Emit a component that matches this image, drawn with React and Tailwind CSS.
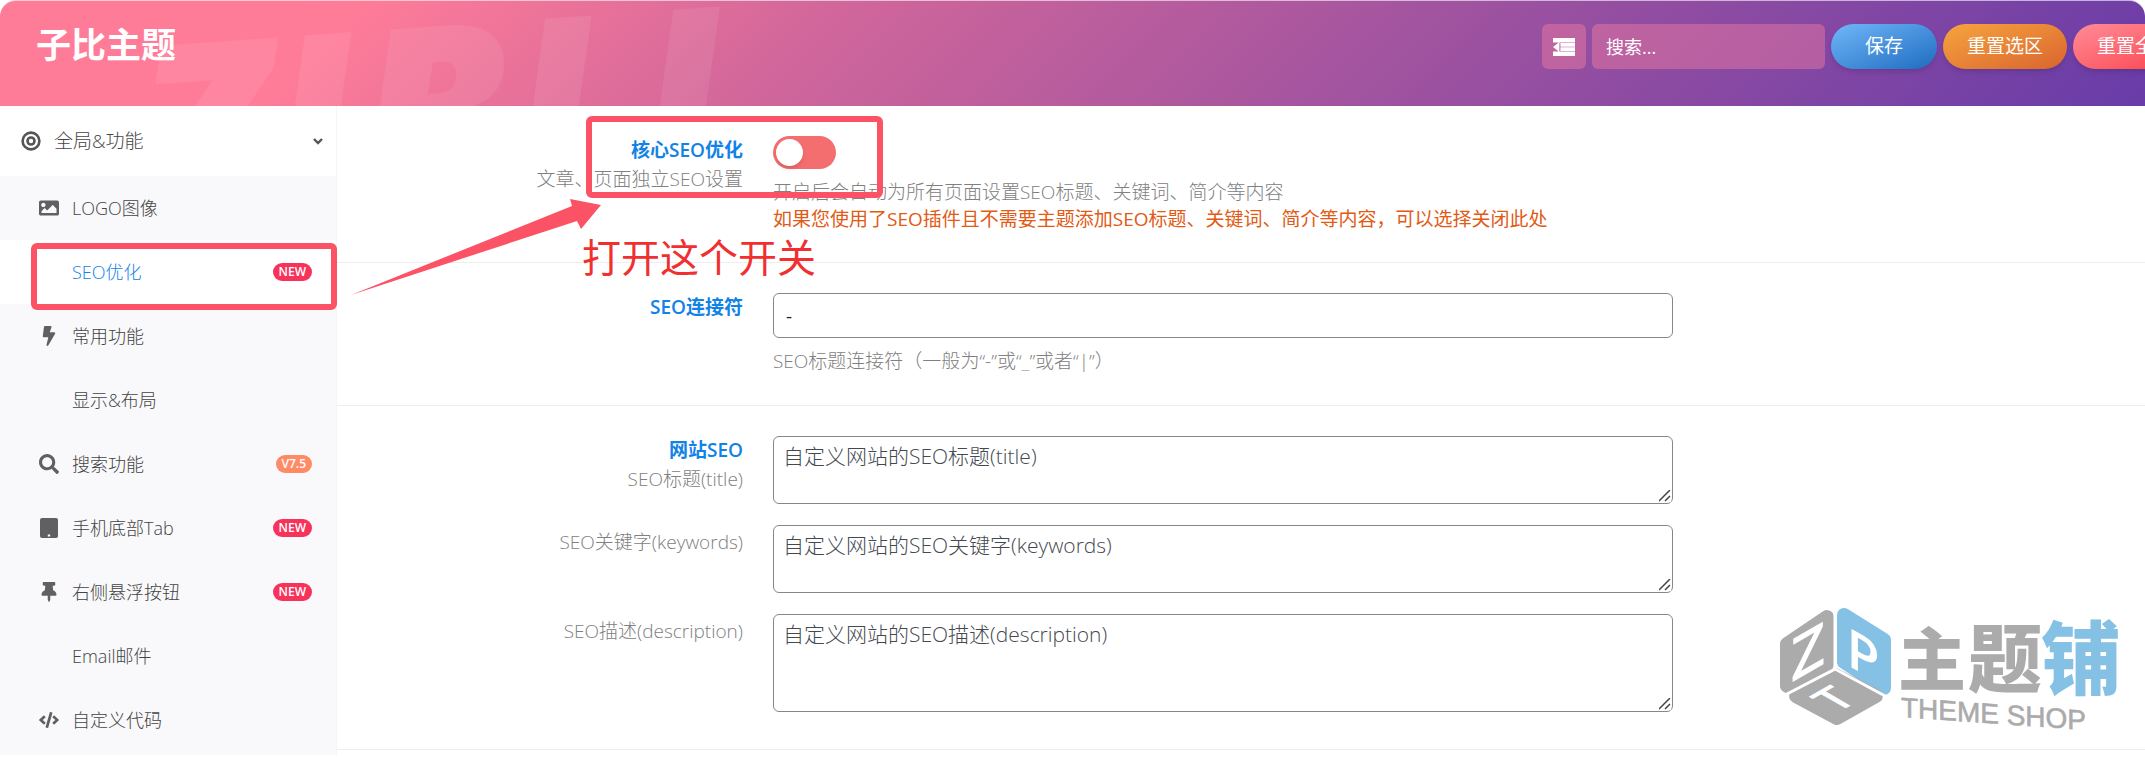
import { useState } from 'react'
import { FaBolt, FaCode, FaImage, FaSearch, FaThumbtack } from 'react-icons/fa'

const TargetIcon = ({ className }) => (
  <svg className={className} viewBox="0 0 20 20" fill="none" stroke="currentColor" aria-hidden="true">
    <circle cx="10" cy="10" r="8.4" strokeWidth="2.6" />
    <circle cx="10" cy="10" r="3.5" strokeWidth="2.6" />
  </svg>
)

const TabletIcon = ({ className }) => (
  <svg className={className} viewBox="0 0 20 20" fill="currentColor" aria-hidden="true">
    <path fillRule="evenodd" d="M3 0h14a2 2 0 0 1 2 2v16a2 2 0 0 1-2 2H3a2 2 0 0 1-2-2V2a2 2 0 0 1 2-2Zm5.8 16.4v2h2.4v-2Z" />
  </svg>
)

const OutdentIcon = ({ className }) => (
  <svg className={className} viewBox="0 0 22 18" fill="currentColor" aria-hidden="true">
    <path d="M0 0h22v4.4H0ZM7.4 5h14.6v3.8H7.4ZM7.4 9.3h14.6V13H7.4ZM0 13.6h22V18H0ZM6.4 4v10L0 9Z" />
  </svg>
)

const menuItems = [
  { id: 'logo', label: 'LOGO图像', icon: FaImage },
  { id: 'seo', label: 'SEO优化', badge: 'NEW' },
  { id: 'common', label: '常用功能', icon: FaBolt },
  { id: 'layout', label: '显示&布局' },
  { id: 'search', label: '搜索功能', icon: FaSearch, badge: 'V7.5' },
  { id: 'tab', label: '手机底部Tab', icon: TabletIcon, badge: 'NEW' },
  { id: 'float', label: '右侧悬浮按钮', icon: FaThumbtack, badge: 'NEW' },
  { id: 'email', label: 'Email邮件' },
  { id: 'code', label: '自定义代码', icon: FaCode }
]

const Header = () => (
  <header className="relative overflow-hidden rounded-t-2xl border-t border-white/60 bg-[linear-gradient(135deg,#ff7c98_0%,#ff7c98_16%,#d0669b_38%,#9b51a0_68%,#683ca8_100%)]">
    <span
      aria-hidden="true"
      className="absolute left-[130px] top-1 origin-top-left -rotate-4 select-none text-[244px] leading-none font-extrabold italic text-white/8"
    >
      ZIBLL
    </span>
    <div className="relative -mr-[52px] flex items-start justify-between pt-[23px] pb-[37px] pl-9">
      <h1 className="text-[35px] leading-[41px] font-bold text-white">子比主题</h1>
      <div className="flex shrink-0 gap-[6px]">
        <button aria-label="展开" className="flex h-[45px] w-[44px] items-center justify-center rounded-md bg-[#ff82a0]/40 text-white">
          <OutdentIcon className="h-[18px] w-[22px]" />
        </button>
        <input
          type="text"
          aria-label="搜索"
          placeholder="搜索..."
          className="h-[45px] w-[233px] rounded-md bg-[#ff82a0]/40 px-[14px] text-[18px] text-white placeholder:text-white focus:outline-none"
        />
        <button className="h-[45px] rounded-full bg-linear-to-br from-[#70b8fa] to-[#1c6cc0] px-[34px] text-[19px] text-white shadow-md">保存</button>
        <button className="h-[45px] rounded-full bg-linear-to-br from-[#f6a43e] to-[#d9642f] px-6 text-[19px] text-white shadow-md">重置选区</button>
        <button className="h-[45px] rounded-full bg-linear-to-br from-[#ff8a98] to-[#fa3a48] px-6 text-[19px] text-white shadow-md">重置全部</button>
      </div>
    </div>
  </header>
)

const Sidebar = ({ active, setActive }) => (
  <nav className="w-[336px] shrink-0 font-light text-[#444]">
    <button className="flex h-[70px] w-full items-center pl-[21px] pr-[13px] text-[19px]">
      <TargetIcon className="h-5 w-5 text-[#555]" />
      <span className="ml-[13px] flex-1 text-left">全局&功能</span>
      <svg className="h-[10px] w-[10px] text-[#555]" viewBox="0 0 10 10" fill="none" stroke="currentColor" strokeWidth="2.4" aria-hidden="true">
        <path d="M1 3l4 4 4-4" />
      </svg>
    </button>
    <ul className="bg-[#f9f9fb] pb-[3px]">
      {menuItems.map(({ id, label, icon: Icon, badge }) => (
        <li key={id} className="relative">
          <a
            href={`#${id}`}
            onClick={() => setActive(id)}
            className={`flex h-16 items-center pl-9 pr-6 text-[18px] ${active === id ? 'bg-white text-[#1283e6]' : ''}`}
          >
            <span className="flex w-[26px] justify-center text-[#606060]">{Icon && <Icon className="h-5 w-5" />}</span>
            <span className="ml-[10px] flex-1">{label}</span>
            {badge && (
              <span className={`rounded-full px-[6px] text-[12px] leading-[18px] font-semibold text-white ${badge === 'NEW' ? 'bg-[#f7325b]' : 'bg-[#ff8a66]'}`}>
                {badge}
              </span>
            )}
          </a>
          {/* Highlight frame */}
          {id === 'seo' && <div className="pointer-events-none absolute left-[31px] -right-px top-[3px] z-10 h-[67px] rounded-md border-6 border-[#fb5365]" />}
        </li>
      ))}
    </ul>
  </nav>
)

const Row = ({ htmlFor, title, subtitle, offset, children }) => (
  <div className="flex gap-[30px]">
    <label htmlFor={htmlFor} className={`block w-[406px] shrink-0 text-right text-[19px] leading-[29px] ${offset ? 'pt-[3px]' : ''}`}>
      {title && <span className="block font-semibold text-[#1283e6]">{title}</span>}
      {subtitle && <span className="block font-light text-[#808080]">{subtitle}</span>}
    </label>
    <div className="max-w-[900px] flex-1">{children}</div>
  </div>
)

const TextArea = ({ id, placeholder, height }) => (
  <div className="relative">
    <textarea
      id={id}
      placeholder={placeholder}
      className={`block w-full rounded-md border border-[#85878c] bg-white px-[9px] py-[5px] text-[21px] leading-[28px] font-light placeholder:text-[#444950] focus:outline-none ${height}`}
    />
    {/* Resize grip */}
    <svg className="pointer-events-none absolute right-[2px] bottom-[2px] h-3 w-3 bg-white" viewBox="0 0 12 12" stroke="#444" strokeWidth="1.5" aria-hidden="true">
      <path d="M0 11L11 0M6 11l5-5" />
    </svg>
  </div>
)

const Logo = () => (
  <svg className="pointer-events-none absolute right-5 bottom-[26px] h-[130px] w-[350px] overflow-visible" viewBox="0 0 350 130" aria-label="主题铺 THEME SHOP">
    <g strokeLinejoin="round" strokeWidth="14">
      <path d="M12 45 L52 18 V65 L12 87 Z" fill="#ababab" stroke="#ababab" />
      <path d="M69 16 L109 41 V89 L69 63 Z" fill="#85c1e4" stroke="#85c1e4" />
      <path d="M21 97 L60 76 L101 97 L62 119 Z" fill="#ababab" stroke="#ababab" />
    </g>
    {/* Gaps between the faces */}
    <path d="M60 8V70L10 96M60 70L112 98" fill="none" stroke="#fff" strokeWidth="3" />
    <g fill="#fff" fontWeight="600" textAnchor="middle">
      <text transform="translate(33 74) skewY(-30)" fontSize="60">Z</text>
      <text transform="translate(88 75) skewY(30)" fontSize="54">P</text>
      <text transform="matrix(0.87 -0.5 0.87 0.5 73 108)" fontSize="46">T</text>
    </g>
    <g fontWeight="900">
      <text x="123" y="86" fontSize="68" fill="#ababab">主</text>
      <text x="193" y="87" fontSize="74" fill="#ababab">题</text>
      <text x="266" y="89" fontSize="80" fill="#85c1e4">铺</text>
    </g>
    <text transform="translate(126 118) skewY(4)" fontSize="28" fill="#ababab" stroke="#ababab" strokeWidth="0.6" className="font-['Liberation_Sans',sans-serif]">THEME SHOP</text>
  </svg>
)

export default function App() {
  const [active, setActive] = useState('seo')
  const [seoEnabled, setSeoEnabled] = useState(false)

  return (
    <div className="relative overflow-hidden bg-white font-['Open_Sans','Noto_Sans_CJK_SC',sans-serif]">
      <Header />
      <div className="flex">
        <Sidebar active={active} setActive={setActive} />

        <main className="relative min-w-0 flex-1 border-l border-[#f5f5f5]">
          {/* Core SEO switch */}
          <section className="border-b border-[#eee] pt-[30px] pb-[29px]">
            <Row htmlFor="core-seo" title="核心SEO优化" subtitle="文章、页面独立SEO设置">
              <input
                id="core-seo"
                type="checkbox"
                role="switch"
                checked={seoEnabled}
                onChange={(e) => setSeoEnabled(e.target.checked)}
                className="block h-[33px] w-[63px] appearance-none rounded-full bg-[#f46e70] before:mt-[3px] before:ml-[3px] before:block before:h-[27px] before:w-[27px] before:rounded-full before:bg-white before:shadow-md checked:bg-[#3ac26a] checked:before:ml-[33px]"
              />
              <div className="mt-[10px] text-[19px] leading-[27px]">
                <p className="font-light text-[#808080]">开启后会自动为所有页面设置SEO标题、关键词、简介等内容</p>
                <p className="text-[#e25a14]">如果您使用了SEO插件且不需要主题添加SEO标题、关键词、简介等内容，可以选择关闭此处</p>
              </div>
            </Row>
          </section>

          {/* Title separator */}
          <section className="border-b border-[#eee] py-[30px]">
            <Row htmlFor="seo-connector" title="SEO连接符">
              <input
                id="seo-connector"
                type="text"
                defaultValue="-"
                className="block h-[45px] w-full rounded-md border border-[#85878c] bg-white px-3 text-[19px] text-[#222] focus:outline-none"
              />
              <p className="mt-[10px] text-[19px] leading-[27px] font-light text-[#808080]">SEO标题连接符（一般为“-”或“_”或者“|”）</p>
            </Row>
          </section>

          {/* Site SEO */}
          <section className="flex flex-col gap-[21px] border-b border-[#eee] pt-[30px] pb-[37px]">
            <Row htmlFor="seo-title" title="网站SEO" subtitle="SEO标题(title)">
              <TextArea id="seo-title" placeholder="自定义网站的SEO标题(title)" height="h-[68px]" />
            </Row>
            <Row htmlFor="seo-keywords" subtitle="SEO关键字(keywords)" offset>
              <TextArea id="seo-keywords" placeholder="自定义网站的SEO关键字(keywords)" height="h-[68px]" />
            </Row>
            <Row htmlFor="seo-description" subtitle="SEO描述(description)" offset>
              <TextArea id="seo-description" placeholder="自定义网站的SEO描述(description)" height="h-[98px]" />
            </Row>
          </section>

          {/* Annotation: frame, arrow and note */}
          <div className="pointer-events-none absolute left-[249px] top-[10px] h-[82px] w-[297px] rounded-md border-6 border-[#fb5365]" />
          <svg className="pointer-events-none absolute left-[13px] top-[90px] h-[102px] w-[256px]" viewBox="0 0 256 102">
            <path d="M1 99 L222 10 L220 3 L251 9 L231 33 L227 25 Z" fill="#fb5365" />
          </svg>
          <p className="pointer-events-none absolute left-[245px] top-[127px] text-[39px] leading-[48px] text-[#f03030]">打开这个开关</p>

          <Logo />
        </main>
      </div>
    </div>
  )
}
